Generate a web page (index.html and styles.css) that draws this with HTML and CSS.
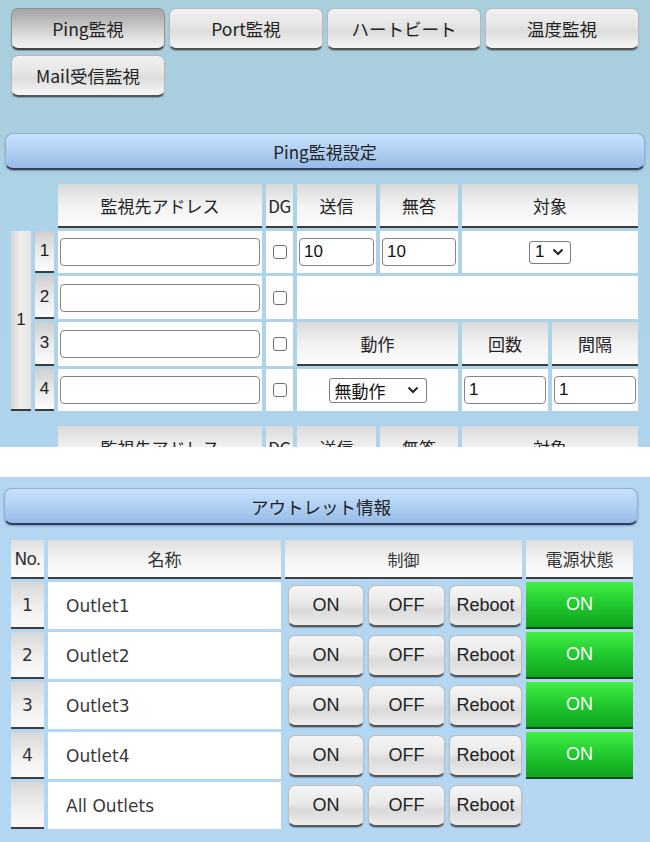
FILE: index.html
```html
<!DOCTYPE html>
<html lang="ja">
<head>
<meta charset="utf-8">
<title>監視設定</title>
<link rel="stylesheet" href="styles.css">
</head>
<body>
<div class="pane pane-top">
  <nav class="tabs">
    <div class="tab active">Ping監視</div>
    <div class="tab">Port監視</div>
    <div class="tab">ハートビート</div>
    <div class="tab">温度監視</div>
    <div class="tab">Mail受信監視</div>
  </nav>

  <div class="sect-head">Ping監視設定</div>

  <div class="ping-grid">
    <div class="blank"></div><div class="blank"></div>
    <div class="th">監視先アドレス</div>
    <div class="th dg">DG</div>
    <div class="th">送信</div>
    <div class="th">無答</div>
    <div class="th span2">対象</div>

    <div class="grp">1</div>

    <div class="idx">1</div>
    <div class="td"><input class="inp" type="text" value=""></div>
    <div class="td center"><input class="chk" type="checkbox"></div>
    <div class="td"><input class="inp" type="text" value="10"></div>
    <div class="td"><input class="inp" type="text" value="10"></div>
    <div class="td span2 center"><span class="sel sel-small">1<svg class="chev" width="12" height="8" viewBox="0 0 12 8"><path d="M1.5 1.5 L6 6 L10.5 1.5" fill="none" stroke="#222" stroke-width="2"/></svg></span></div>

    <div class="idx">2</div>
    <div class="td"><input class="inp" type="text" value=""></div>
    <div class="td center"><input class="chk" type="checkbox"></div>
    <div class="td span4"></div>

    <div class="idx">3</div>
    <div class="td"><input class="inp" type="text" value=""></div>
    <div class="td center"><input class="chk" type="checkbox"></div>
    <div class="th span2">動作</div>
    <div class="th">回数</div>
    <div class="th">間隔</div>

    <div class="idx">4</div>
    <div class="td"><input class="inp" type="text" value=""></div>
    <div class="td center"><input class="chk" type="checkbox"></div>
    <div class="td span2 center"><span class="sel sel-wide">無動作<svg class="chev" width="12" height="8" viewBox="0 0 12 8"><path d="M1.5 1.5 L6 6 L10.5 1.5" fill="none" stroke="#222" stroke-width="2"/></svg></span></div>
    <div class="td"><input class="inp" type="text" value="1"></div>
    <div class="td"><input class="inp" type="text" value="1"></div>
  </div>

  <div class="ping-grid next">
    <div class="blank"></div><div class="blank"></div>
    <div class="th">監視先アドレス</div>
    <div class="th dg">DG</div>
    <div class="th">送信</div>
    <div class="th">無答</div>
    <div class="th span2">対象</div>
  </div>
</div>

<div class="divider"></div>

<div class="pane pane-bottom">
  <div class="sect-head sect-head-2">アウトレット情報</div>

  <div class="outlet-grid">
    <div class="oth no">No.</div>
    <div class="oth">名称</div>
    <div class="oth ctl">制御</div>
    <div class="oth">電源状態</div>

    <div class="ono">1</div>
    <div class="oname">Outlet1</div>
    <div class="octl"><span class="btn b-on">ON</span><span class="btn b-off">OFF</span><span class="btn b-rb">Reboot</span></div>
    <div class="pwr">ON</div>

    <div class="ono">2</div>
    <div class="oname">Outlet2</div>
    <div class="octl"><span class="btn b-on">ON</span><span class="btn b-off">OFF</span><span class="btn b-rb">Reboot</span></div>
    <div class="pwr">ON</div>

    <div class="ono">3</div>
    <div class="oname">Outlet3</div>
    <div class="octl"><span class="btn b-on">ON</span><span class="btn b-off">OFF</span><span class="btn b-rb">Reboot</span></div>
    <div class="pwr">ON</div>

    <div class="ono">4</div>
    <div class="oname">Outlet4</div>
    <div class="octl"><span class="btn b-on">ON</span><span class="btn b-off">OFF</span><span class="btn b-rb">Reboot</span></div>
    <div class="pwr">ON</div>

    <div class="ono"></div>
    <div class="oname">All Outlets</div>
    <div class="octl"><span class="btn b-on">ON</span><span class="btn b-off">OFF</span><span class="btn b-rb">Reboot</span></div>
    <div class="blank"></div>
  </div>
</div>
</body>
</html>
```

FILE: styles.css
```css
* { box-sizing: border-box; }

html, body {
  margin: 0;
  padding: 0;
  background: #ffffff;
}

body {
  width: 650px;
  font-family: "Noto Sans CJK JP", "Noto Sans", sans-serif;
  color: #222;
}

.pane {
  overflow: hidden;
}

.pane-top {
  height: 447px;
  background: linear-gradient(#a9cedc 0px, #aad0e0 130px, #add3ea 230px, #aed3ec 447px);
  padding-top: 8px;
}

.divider {
  height: 30px;
  background: #fff;
}

.pane-bottom {
  height: 365px;
  background: #b3d6f3;
  padding-top: 11px;
}

/* Tabs */
.tabs {
  display: flex;
  flex-wrap: wrap;
  gap: 5px 4px;
  padding-left: 11px;
  width: 650px;
}

.tab {
  width: 154px;
  height: 42px;
  border-radius: 7px;
  border: 1px solid #b9b9b9;
  border-bottom: 2px solid #555;
  background: linear-gradient(#f1f1f1 0%, #e4e4e4 45%, #dcdcdc 55%, #f6f6f6 100%);
  display: flex;
  align-items: center;
  justify-content: center;
  font-size: 17.5px;
  color: #222;
  box-shadow: 0 1px 1px rgba(0,0,0,0.25);
}

.tab.active {
  background: linear-gradient(#a4a4a4 0%, #c4c4c4 40%, #e2e2e2 75%, #f2f2f2 100%);
  border-color: #8e8e8e;
  border-bottom-color: #444;
}

/* Section header */
.sect-head {
  margin: 36px 5px 0 5px;
  height: 37px;
  border-radius: 8px;
  border: 1px solid #8fb0d8;
  border-bottom: 2px solid #2f405f;
  background: linear-gradient(#c7e1fb 0%, #b3d2f4 45%, #97bbe7 100%);
  display: flex;
  align-items: center;
  justify-content: center;
  font-size: 17px;
  color: #222;
  box-shadow: 0 1px 2px rgba(0,0,0,0.3);
}

.sect-head-2 {
  margin: 0 12px 0 4px;
  height: 37px;
  font-size: 17.5px;
}

/* Ping grid */
.ping-grid {
  display: grid;
  grid-template-columns: 20px 19px 204px 27px 79px 78px 86px 86px;
  grid-template-rows: 44px 42px 43px 44px 42px;
  column-gap: 4px;
  row-gap: 3px;
  margin: 14px 0 0 11px;
}

.ping-grid.next {
  grid-template-rows: 44px;
  margin-top: 15px;
}

.blank { background: transparent; }

.th {
  background: linear-gradient(#d9d9d9 0%, #f2f2f2 50%, #fcfcfc 100%);
  border-bottom: 2px solid #3d3d3d;
  display: flex;
  align-items: center;
  justify-content: center;
  font-size: 17px;
  color: #222;
}

.th.dg {
  letter-spacing: -0.5px;
}

.span2 { grid-column: span 2; }
.span4 { grid-column: span 4; }

.grp {
  grid-column: 1;
  grid-row: 2 / span 4;
  background: linear-gradient(90deg, #d6d6d6 0%, #efefef 50%, #e2e2e2 100%);
  border-bottom: 2px solid #3d3d3d;
  display: flex;
  align-items: center;
  justify-content: center;
  font-size: 17px;
  font-family: "Liberation Sans", Arial, sans-serif;
}

.idx {
  background: linear-gradient(#cfcfcf 0%, #ececec 55%, #fbfbfb 100%);
  border-bottom: 2px solid #3d3d3d;
  display: flex;
  align-items: center;
  justify-content: center;
  font-size: 17px;
  font-family: "Liberation Sans", Arial, sans-serif;
}

.td {
  background: #fff;
  display: flex;
  align-items: center;
  padding: 0 2px;
}

.td.center { justify-content: center; }

.inp {
  width: 100%;
  height: 28px;
  border: 1px solid #858585;
  border-radius: 4px;
  padding: 0 4px;
  font-family: "Liberation Sans", Arial, sans-serif;
  font-size: 17px;
  color: #111;
  background: #fff;
  outline: none;
}

.chk {
  -webkit-appearance: none;
  appearance: none;
  width: 14px;
  height: 14px;
  margin: 0;
  border: 1px solid #6f6f6f;
  border-radius: 3px;
  background: #fff;
}

.sel {
  display: inline-flex;
  align-items: center;
  border: 1px solid #7d7d7d;
  border-radius: 3px;
  background: #fff;
  color: #111;
  height: 23px;
  font-size: 17px;
}

.sel-small {
  width: 42px;
  padding: 0 6px 0 5px;
  justify-content: space-between;
  font-family: "Liberation Sans", Arial, sans-serif;
}

.sel-wide {
  width: 98px;
  height: 25px;
  padding: 0 7px 0 5px;
  justify-content: space-between;
}

.chev { display: block; }

/* Outlet grid */
.outlet-grid {
  display: grid;
  grid-template-columns: 33px 233px 237px 107px;
  grid-template-rows: 39px 47px 47px 47px 47px 47px;
  column-gap: 4px;
  row-gap: 3px;
  margin: 15px 0 0 11px;
}

.oth {
  background: linear-gradient(#dedede 0%, #f3f3f3 50%, #fdfdfd 100%);
  border-bottom: 2px solid #404040;
  display: flex;
  align-items: center;
  justify-content: center;
  font-size: 17px;
  color: #333;
}

.oth.no {
  font-family: "DejaVu Sans", Verdana, sans-serif;
  font-size: 17px;
  letter-spacing: -0.8px;
}

.oth.ctl { font-size: 16px; }

.ono {
  background: linear-gradient(#d7d7d7 0%, #efefef 55%, #fafafa 100%);
  border-bottom: 2px solid #404040;
  display: flex;
  align-items: center;
  justify-content: center;
  font-family: "DejaVu Sans", Verdana, sans-serif;
  font-size: 17px;
  color: #333;
}

.oname {
  background: #fff;
  display: flex;
  align-items: center;
  padding-left: 18px;
  font-family: "DejaVu Sans", Verdana, sans-serif;
  font-size: 17px;
  color: #3a3a3a;
}

.octl {
  display: flex;
  align-items: center;
  gap: 4px;
  padding-left: 3px;
}

.btn {
  height: 42px;
  border-radius: 7px;
  border: 1px solid #bdbdbd;
  border-bottom: 2px solid #555;
  background: linear-gradient(#f5f5f5 0%, #e9e9e9 45%, #dadada 60%, #ececec 100%);
  display: flex;
  align-items: center;
  justify-content: center;
  font-family: "Liberation Sans", Arial, sans-serif;
  font-size: 18px;
  color: #222;
  box-shadow: 0 1px 1px rgba(0,0,0,0.25);
}

.b-on { width: 76px; }
.b-off { width: 77px; }
.b-rb { width: 73px; }

.pwr {
  background: linear-gradient(#44f044 0%, #22cc30 45%, #10a420 100%);
  border-bottom: 2px solid #0b4d14;
  display: flex;
  align-items: center;
  justify-content: center;
  font-family: "Liberation Sans", Arial, sans-serif;
  font-size: 18px;
  color: #fff;
}
```
